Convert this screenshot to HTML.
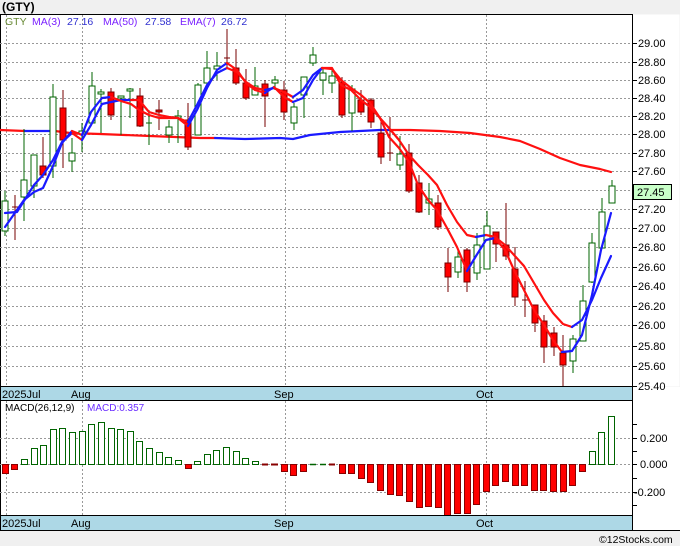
<!DOCTYPE html>
<html><head><meta charset="utf-8"><style>
html,body{margin:0;padding:0;background:#f0f0f0;}
svg{display:block;font-family:"Liberation Sans",sans-serif;}
.g line{stroke:#006400;stroke-width:1}
.g rect{fill:#fff;stroke:#006400;stroke-width:1}
.r line{stroke:#700;stroke-width:1}
.r rect{fill:#f00;stroke:#700;stroke-width:1}
.d line{stroke:#700;stroke-width:1}
.grid line{stroke:#999;stroke-width:1;stroke-dasharray:2,2}
.ax text{font-size:11px;fill:#000}
.ln{fill:none;stroke-width:2.2;stroke-linejoin:round;stroke-linecap:round}
.bl{stroke:#1a1aff}.rd{stroke:#ff1010}
.mg{fill:#fff;stroke:#006400}.mr{fill:#f00;stroke:#800}
</style></head><body>
<svg width="680" height="546" viewBox="0 0 680 546" xmlns="http://www.w3.org/2000/svg">
<rect x="0" y="0" width="680" height="546" fill="#f0f0f0"/>
<text x="2" y="11" font-size="12" font-weight="bold">(GTY)</text>
<rect x="0.5" y="14.5" width="632" height="372" fill="#fff" stroke="#000"/>
<rect x="632.5" y="14.5" width="47" height="372" fill="#fff"/>
<rect x="633" y="387" width="47" height="144" fill="#fff"/>
<line x1="632.5" y1="14" x2="632.5" y2="531" stroke="#000"/>
<g class="grid">
<line x1="0" x2="632" y1="43.5" y2="43.5"/><line x1="0" x2="632" y1="62.5" y2="62.5"/><line x1="0" x2="632" y1="80.5" y2="80.5"/><line x1="0" x2="632" y1="98.5" y2="98.5"/><line x1="0" x2="632" y1="116.5" y2="116.5"/><line x1="0" x2="632" y1="134.5" y2="134.5"/><line x1="0" x2="632" y1="153.5" y2="153.5"/><line x1="0" x2="632" y1="171.5" y2="171.5"/><line x1="0" x2="632" y1="190.5" y2="190.5"/><line x1="0" x2="632" y1="209.5" y2="209.5"/><line x1="0" x2="632" y1="228.5" y2="228.5"/><line x1="0" x2="632" y1="247.5" y2="247.5"/><line x1="0" x2="632" y1="267.5" y2="267.5"/><line x1="0" x2="632" y1="286.5" y2="286.5"/><line x1="0" x2="632" y1="306.5" y2="306.5"/><line x1="0" x2="632" y1="325.5" y2="325.5"/><line x1="0" x2="632" y1="346.5" y2="346.5"/><line x1="0" x2="632" y1="366.5" y2="366.5"/>
<line x1="6.5" x2="6.5" y1="15" y2="386"/><line x1="82.5" x2="82.5" y1="15" y2="386"/><line x1="285.5" x2="285.5" y1="15" y2="386"/><line x1="486.5" x2="486.5" y1="15" y2="386"/>
</g>
<g class="ax">
<g stroke="#000"><line x1="632" x2="637" y1="43.5" y2="43.5"/><line x1="632" x2="637" y1="62.5" y2="62.5"/><line x1="632" x2="637" y1="80.5" y2="80.5"/><line x1="632" x2="637" y1="98.5" y2="98.5"/><line x1="632" x2="637" y1="116.5" y2="116.5"/><line x1="632" x2="637" y1="134.5" y2="134.5"/><line x1="632" x2="637" y1="153.5" y2="153.5"/><line x1="632" x2="637" y1="171.5" y2="171.5"/><line x1="632" x2="637" y1="209.5" y2="209.5"/><line x1="632" x2="637" y1="228.5" y2="228.5"/><line x1="632" x2="637" y1="247.5" y2="247.5"/><line x1="632" x2="637" y1="267.5" y2="267.5"/><line x1="632" x2="637" y1="286.5" y2="286.5"/><line x1="632" x2="637" y1="306.5" y2="306.5"/><line x1="632" x2="637" y1="325.5" y2="325.5"/><line x1="632" x2="637" y1="346.5" y2="346.5"/><line x1="632" x2="637" y1="366.5" y2="366.5"/><line x1="632" x2="637" y1="386.5" y2="386.5"/></g>
<text x="638" y="47">29.00</text><text x="638" y="66">28.80</text><text x="638" y="84">28.60</text><text x="638" y="102">28.40</text><text x="638" y="120">28.20</text><text x="638" y="138">28.00</text><text x="638" y="157">27.80</text><text x="638" y="175">27.60</text><text x="638" y="213">27.20</text><text x="638" y="232">27.00</text><text x="638" y="251">26.80</text><text x="638" y="271">26.60</text><text x="638" y="290">26.40</text><text x="638" y="310">26.20</text><text x="638" y="329">26.00</text><text x="638" y="350">25.80</text><text x="638" y="370">25.60</text><text x="638" y="390">25.40</text>
</g>
<rect x="633.5" y="184.5" width="38" height="15" fill="#c8ffc8" stroke="#000"/>
<text x="637" y="196" font-size="11">27.45</text>
<polyline class="ln rd" points="0,130 25,131"/>
<polyline class="ln bl" points="25,131 55,131"/>
<polyline class="ln rd" points="55,131 70,133 100,134 150,136 200,138 215,138"/>
<polyline class="ln bl" points="215,138 245,139 280,138 293,139 310,135 340,132 380,130 390,130"/>
<polyline class="ln rd" points="390,130 410,130 440,131 470,133 500,137 520,141 540,149 560,158 580,165 600,169 611,172"/>
<g class="g"><line x1="5" x2="5" y1="191" y2="236"/><rect x="2" y="201" width="6" height="30"/></g>
<g class="d"><line x1="15" x2="15" y1="195" y2="240"/><line x1="12" x2="18" y1="207" y2="207"/></g>
<g class="g"><line x1="24" x2="24" y1="129" y2="221"/><rect x="21" y="180" width="6" height="17"/></g>
<g class="g"><line x1="34" x2="34" y1="155" y2="198"/><rect x="31" y="155" width="6" height="31"/></g>
<g class="r"><line x1="43" x2="43" y1="137" y2="178"/><rect x="40" y="166" width="6" height="9"/></g>
<g class="g"><line x1="53" x2="53" y1="84" y2="178"/><rect x="50" y="97" width="6" height="69"/></g>
<g class="r"><line x1="63" x2="63" y1="90" y2="168"/><rect x="60" y="108" width="6" height="32"/></g>
<g class="g"><line x1="72" x2="72" y1="138" y2="172"/><rect x="69" y="153" width="6" height="8"/></g>
<g class="g"><line x1="82" x2="82" y1="123" y2="152"/><rect x="79" y="131" width="6" height="3"/></g>
<g class="g"><line x1="92" x2="92" y1="72" y2="124"/><rect x="89" y="86" width="6" height="37"/></g>
<g class="g"><line x1="101" x2="101" y1="89" y2="133"/><rect x="98" y="92" width="6" height="2"/></g>
<g class="r"><line x1="111" x2="111" y1="88" y2="120"/><rect x="108" y="92" width="6" height="23"/></g>
<g class="g"><line x1="121" x2="121" y1="96" y2="135"/><rect x="118" y="96" width="6" height="2"/></g>
<g class="g"><line x1="130" x2="130" y1="88" y2="118"/><rect x="127" y="89" width="6" height="2"/></g>
<g class="r"><line x1="140" x2="140" y1="88" y2="127"/><rect x="137" y="96" width="6" height="30"/></g>
<g class="g"><line x1="149" x2="149" y1="110" y2="145"/><line x1="146" x2="152" y1="123" y2="123"/></g>
<g class="r"><line x1="159" x2="159" y1="100" y2="130"/><rect x="156" y="110" width="6" height="2"/></g>
<g class="g"><line x1="169" x2="169" y1="120" y2="143"/><rect x="166" y="127" width="6" height="8"/></g>
<g class="g"><line x1="178" x2="178" y1="110" y2="143"/><rect x="175" y="116" width="6" height="2"/></g>
<g class="r"><line x1="188" x2="188" y1="103" y2="150"/><rect x="185" y="120" width="6" height="27"/></g>
<g class="g"><line x1="198" x2="198" y1="83" y2="135"/><rect x="195" y="85" width="6" height="50"/></g>
<g class="g"><line x1="207" x2="207" y1="51" y2="83"/><rect x="204" y="68" width="6" height="15"/></g>
<g class="g"><line x1="217" x2="217" y1="52" y2="80"/><rect x="214" y="66" width="6" height="3"/></g>
<g class="d"><line x1="227" x2="227" y1="29" y2="68" stroke="#000"/><line x1="224" x2="230" y1="58" y2="58" stroke="#000"/></g>
<g class="r"><line x1="236" x2="236" y1="49" y2="85"/><rect x="233" y="68" width="6" height="15"/></g>
<g class="r"><line x1="246" x2="246" y1="69" y2="100"/><rect x="243" y="83" width="6" height="15"/></g>
<g class="g"><line x1="255" x2="255" y1="67" y2="95"/><rect x="252" y="86" width="6" height="9"/></g>
<g class="r"><line x1="265" x2="265" y1="80" y2="127"/><rect x="262" y="84" width="6" height="12"/></g>
<g class="g"><line x1="275" x2="275" y1="76" y2="90"/><rect x="272" y="80" width="6" height="3"/></g>
<g class="r"><line x1="284" x2="284" y1="81" y2="120"/><rect x="281" y="90" width="6" height="22"/></g>
<g class="g"><line x1="294" x2="294" y1="103" y2="130"/><rect x="291" y="107" width="6" height="16"/></g>
<g class="g"><line x1="304" x2="304" y1="77" y2="118"/><rect x="301" y="77" width="6" height="18"/></g>
<g class="g"><line x1="313" x2="313" y1="47" y2="66"/><rect x="310" y="55" width="6" height="8"/></g>
<g class="g"><line x1="323" x2="323" y1="68" y2="95"/><rect x="320" y="73" width="6" height="7"/></g>
<g class="g"><line x1="332" x2="332" y1="70" y2="93"/><rect x="329" y="76" width="6" height="7"/></g>
<g class="r"><line x1="342" x2="342" y1="77" y2="118"/><rect x="339" y="82" width="6" height="33"/></g>
<g class="g"><line x1="352" x2="352" y1="85" y2="131"/><rect x="349" y="89" width="6" height="24"/></g>
<g class="r"><line x1="361" x2="361" y1="90" y2="115"/><rect x="358" y="100" width="6" height="12"/></g>
<g class="r"><line x1="371" x2="371" y1="98" y2="128"/><rect x="368" y="100" width="6" height="22"/></g>
<g class="r"><line x1="381" x2="381" y1="122" y2="164"/><rect x="378" y="133" width="6" height="24"/></g>
<g class="d"><line x1="390" x2="390" y1="117" y2="161"/><line x1="387" x2="393" y1="153" y2="153"/></g>
<g class="g"><line x1="400" x2="400" y1="136" y2="170"/><rect x="397" y="154" width="6" height="11"/></g>
<g class="r"><line x1="409" x2="409" y1="144" y2="193"/><rect x="406" y="153" width="6" height="38"/></g>
<g class="r"><line x1="419" x2="419" y1="175" y2="213"/><rect x="416" y="183" width="6" height="29"/></g>
<g class="g"><line x1="429" x2="429" y1="183" y2="215"/><rect x="426" y="199" width="6" height="4"/></g>
<g class="r"><line x1="438" x2="438" y1="195" y2="230"/><rect x="435" y="203" width="6" height="24"/></g>
<g class="r"><line x1="448" x2="448" y1="248" y2="292"/><rect x="445" y="263" width="6" height="14"/></g>
<g class="g"><line x1="458" x2="458" y1="250" y2="278"/><rect x="455" y="257" width="6" height="15"/></g>
<g class="r"><line x1="467" x2="467" y1="248" y2="292"/><rect x="464" y="250" width="6" height="32"/></g>
<g class="g"><line x1="477" x2="477" y1="233" y2="280"/><rect x="474" y="245" width="6" height="28"/></g>
<g class="g"><line x1="487" x2="487" y1="211" y2="269"/><rect x="484" y="226" width="6" height="43"/></g>
<g class="r"><line x1="496" x2="496" y1="232" y2="262"/><rect x="493" y="232" width="6" height="12"/></g>
<g class="r"><line x1="506" x2="506" y1="203" y2="260"/><rect x="503" y="245" width="6" height="11"/></g>
<g class="r"><line x1="515" x2="515" y1="247" y2="306"/><rect x="512" y="269" width="6" height="28"/></g>
<g class="d"><line x1="525" x2="525" y1="281" y2="317" stroke="#000"/><line x1="522" x2="528" y1="300" y2="300" stroke="#000"/></g>
<g class="r"><line x1="535" x2="535" y1="305" y2="332"/><rect x="532" y="305" width="6" height="18"/></g>
<g class="r"><line x1="544" x2="544" y1="315" y2="363"/><rect x="541" y="321" width="6" height="26"/></g>
<g class="r"><line x1="554" x2="554" y1="327" y2="356"/><rect x="551" y="333" width="6" height="14"/></g>
<g class="r"><line x1="563" x2="563" y1="335" y2="387"/><rect x="560" y="353" width="6" height="12"/></g>
<g class="g"><line x1="573" x2="573" y1="335" y2="373"/><rect x="570" y="339" width="6" height="22"/></g>
<g class="g"><line x1="583" x2="583" y1="285" y2="341"/><rect x="580" y="301" width="6" height="40"/></g>
<g class="g"><line x1="592" x2="592" y1="233" y2="283"/><rect x="589" y="243" width="6" height="39"/></g>
<g class="g"><line x1="602" x2="602" y1="198" y2="248"/><rect x="599" y="212" width="6" height="36"/></g>
<g class="g"><line x1="612" x2="612" y1="180" y2="203"/><rect x="609" y="186" width="6" height="17"/></g>
<polyline class="ln bl" points="5,213 17,212 34,185 43,175 53,160 62,142 72,133"/>
<polyline class="ln rd" points="72,133 82,140"/>
<polyline class="ln bl" points="82,140 91,125 102,104 111,102 121,100 131,100"/>
<polyline class="ln rd" points="131,100 139,100 149,112 159,115 169,117 178,118 188,122"/>
<polyline class="ln bl" points="188,122 197,105 207,85 217,73 227,68"/>
<polyline class="ln rd" points="227,68 237,72 246,82 255,88 265,90"/>
<polyline class="ln bl" points="265,90 274,88"/>
<polyline class="ln rd" points="274,88 284,92 293,97"/>
<polyline class="ln bl" points="293,97 303,90 313,75 322,68"/>
<polyline class="ln rd" points="322,68 332,69 341,80 351,88 361,95 370,103 380,118 389,128 399,140 409,155 418,165 428,175 437,185 447,205 457,222 467,235 476,237"/>
<polyline class="ln bl" points="476,237 486,235"/>
<polyline class="ln rd" points="486,235 495,237 505,245 514,255 524,266 534,283 544,300 553,313 563,324 572,327"/>
<polyline class="ln bl" points="572,327 582,320 592,300 601,278 611,256"/>
<polyline class="ln bl" points="5,227 24,200 34,192 43,188 53,166 62,143 72,131"/>
<polyline class="ln rd" points="72,131 82,135"/>
<polyline class="ln bl" points="82,135 91,112 102,98 111,97"/>
<polyline class="ln rd" points="111,97 121,101 131,104 139,110 149,115 159,118 169,118 178,118 188,126"/>
<polyline class="ln bl" points="188,126 197,110 207,88 217,70 227,63"/>
<polyline class="ln rd" points="227,63 237,70 246,83 255,90 265,93"/>
<polyline class="ln bl" points="265,93 274,87"/>
<polyline class="ln rd" points="274,87 284,97 293,102"/>
<polyline class="ln bl" points="293,102 303,98 313,80 322,68"/>
<polyline class="ln rd" points="322,68 332,68 341,85 351,90 361,100 370,107 380,118 389,137 399,148 409,162 418,185 428,200 437,210 447,228 457,247 467,271"/>
<polyline class="ln bl" points="467,271 476,256 486,240 495,238"/>
<polyline class="ln rd" points="495,238 505,250 514,270 524,290 534,310 544,325 553,340 562,352"/>
<polyline class="ln bl" points="562,352 572,351 582,335 592,295 601,250 611,213"/>
<text y="25" font-size="10.5"><tspan x="5" fill="#668833">GTY</tspan><tspan x="32" fill="#7b22ff">MA(3)</tspan><tspan x="67" fill="#3030d0">27.16</tspan><tspan x="103" fill="#7b22ff">MA(50)</tspan><tspan x="145" fill="#3030d0">27.58</tspan><tspan x="180" fill="#7b22ff">EMA(7)</tspan><tspan x="221" fill="#3030d0">26.72</tspan></text>
<rect x="0.5" y="386.5" width="632" height="14" fill="#add8e6" stroke="#000"/>
<g font-size="11"><text x="2" y="398">2025Jul</text><text x="71" y="398">Aug</text><text x="274" y="398">Sep</text><text x="476" y="398">Oct</text></g>
<rect x="0.5" y="400.5" width="632" height="115" fill="#fff" stroke="#000"/>
<g class="grid"><line x1="0" x2="632" y1="438.5" y2="438.5"/><line x1="0" x2="632" y1="464.5" y2="464.5"/><line x1="0" x2="632" y1="492.5" y2="492.5"/><line x1="6.5" x2="6.5" y1="401" y2="515"/><line x1="82.5" x2="82.5" y1="401" y2="515"/><line x1="285.5" x2="285.5" y1="401" y2="515"/><line x1="486.5" x2="486.5" y1="401" y2="515"/></g>
<line x1="632.5" y1="14" x2="632.5" y2="531" stroke="#000"/>
<g stroke="#000"><line x1="632" x2="637" y1="424.5" y2="424.5"/><line x1="632" x2="637" y1="438.5" y2="438.5"/><line x1="632" x2="637" y1="451.5" y2="451.5"/><line x1="632" x2="637" y1="464.5" y2="464.5"/><line x1="632" x2="637" y1="478.5" y2="478.5"/><line x1="632" x2="637" y1="492.5" y2="492.5"/><line x1="632" x2="637" y1="505.5" y2="505.5"/></g>
<g font-size="11"><text x="640" y="442">0.200</text><text x="640" y="468">0.000</text><text x="634" y="496">-0.200</text></g>
<text y="411" font-size="10"><tspan x="5" fill="#000">MACD(26,12,9)</tspan><tspan x="87" fill="#6a2cff">MACD:0.357</tspan></text>
<g>
<rect class="mr" x="2.5" y="464.5" width="6" height="9"/>
<rect class="mr" x="11.5" y="464.5" width="6" height="5"/>
<rect class="mg" x="21.5" y="459.5" width="6" height="5"/>
<rect class="mg" x="31.5" y="448.5" width="6" height="16"/>
<rect class="mg" x="40.5" y="445.5" width="6" height="19"/>
<rect class="mg" x="50.5" y="429.5" width="6" height="35"/>
<rect class="mg" x="59.5" y="428.5" width="6" height="36"/>
<rect class="mg" x="69.5" y="432.5" width="6" height="32"/>
<rect class="mg" x="79.5" y="431.5" width="6" height="33"/>
<rect class="mg" x="88.5" y="424.5" width="6" height="40"/>
<rect class="mg" x="98.5" y="422.5" width="6" height="42"/>
<rect class="mg" x="108.5" y="428.5" width="6" height="36"/>
<rect class="mg" x="117.5" y="429.5" width="6" height="35"/>
<rect class="mg" x="127.5" y="431.5" width="6" height="33"/>
<rect class="mg" x="136.5" y="441.5" width="6" height="23"/>
<rect class="mg" x="146.5" y="448.5" width="6" height="16"/>
<rect class="mg" x="156.5" y="452.5" width="6" height="12"/>
<rect class="mg" x="165.5" y="457.5" width="6" height="7"/>
<rect class="mg" x="175.5" y="460.5" width="6" height="4"/>
<rect class="mr" x="185.5" y="464.5" width="6" height="4"/>
<rect class="mg" x="194.5" y="461.5" width="6" height="3"/>
<rect class="mg" x="204.5" y="454.5" width="6" height="10"/>
<rect class="mg" x="213.5" y="450.5" width="6" height="14"/>
<rect class="mg" x="223.5" y="447.5" width="6" height="17"/>
<rect class="mg" x="233.5" y="451.5" width="6" height="13"/>
<rect class="mg" x="242.5" y="458.5" width="6" height="6"/>
<rect class="mg" x="252.5" y="461.5" width="6" height="3"/>
<line x1="262" x2="268" y1="464.5" y2="464.5" stroke="#800" stroke-width="2"/>
<line x1="271" x2="278" y1="464.5" y2="464.5" stroke="#800" stroke-width="2"/>
<rect class="mr" x="281.5" y="464.5" width="6" height="7"/>
<rect class="mr" x="290.5" y="464.5" width="6" height="11"/>
<rect class="mr" x="300.5" y="464.5" width="6" height="7"/>
<line x1="310" x2="316" y1="464.5" y2="464.5" stroke="#006400" stroke-width="1.5"/>
<line x1="320" x2="326" y1="464.5" y2="464.5" stroke="#006400" stroke-width="1.5"/>
<line x1="329" x2="335" y1="464.5" y2="464.5" stroke="#800" stroke-width="2"/>
<rect class="mr" x="339.5" y="464.5" width="6" height="9"/>
<rect class="mr" x="348.5" y="464.5" width="6" height="9"/>
<rect class="mr" x="358.5" y="464.5" width="6" height="14"/>
<rect class="mr" x="367.5" y="464.5" width="6" height="18"/>
<rect class="mr" x="377.5" y="464.5" width="6" height="26"/>
<rect class="mr" x="387.5" y="464.5" width="6" height="30"/>
<rect class="mr" x="396.5" y="464.5" width="6" height="31"/>
<rect class="mr" x="406.5" y="464.5" width="6" height="37"/>
<rect class="mr" x="416.5" y="464.5" width="6" height="43"/>
<rect class="mr" x="425.5" y="464.5" width="6" height="42"/>
<rect class="mr" x="435.5" y="464.5" width="6" height="43"/>
<rect class="mr" x="444.5" y="464.5" width="6" height="51"/>
<rect class="mr" x="454.5" y="464.5" width="6" height="49"/>
<rect class="mr" x="464.5" y="464.5" width="6" height="49"/>
<rect class="mr" x="473.5" y="464.5" width="6" height="40"/>
<rect class="mr" x="483.5" y="464.5" width="6" height="27"/>
<rect class="mr" x="492.5" y="464.5" width="6" height="21"/>
<rect class="mr" x="502.5" y="464.5" width="6" height="17"/>
<rect class="mr" x="512.5" y="464.5" width="6" height="21"/>
<rect class="mr" x="521.5" y="464.5" width="6" height="21"/>
<rect class="mr" x="531.5" y="464.5" width="6" height="26"/>
<rect class="mr" x="540.5" y="464.5" width="6" height="26"/>
<rect class="mr" x="550.5" y="464.5" width="6" height="27"/>
<rect class="mr" x="560.5" y="464.5" width="6" height="27"/>
<rect class="mr" x="569.5" y="464.5" width="6" height="21"/>
<rect class="mr" x="579.5" y="464.5" width="6" height="7"/>
<rect class="mg" x="589.5" y="451.5" width="6" height="13"/>
<rect class="mg" x="598.5" y="432.5" width="6" height="32"/>
<rect class="mg" x="608.5" y="416.5" width="6" height="48"/>
</g>
<rect x="0.5" y="515.5" width="632" height="15" fill="#add8e6" stroke="#000"/>
<g font-size="11"><text x="2" y="527">2025Jul</text><text x="71" y="527">Aug</text><text x="274" y="527">Sep</text><text x="476" y="527">Oct</text></g>
<line x1="0" x2="680" y1="530.5" y2="530.5" stroke="#000"/>
<text x="599" y="543" font-size="10.5" fill="#000">©12Stocks.com</text>
</svg>
</body></html>
